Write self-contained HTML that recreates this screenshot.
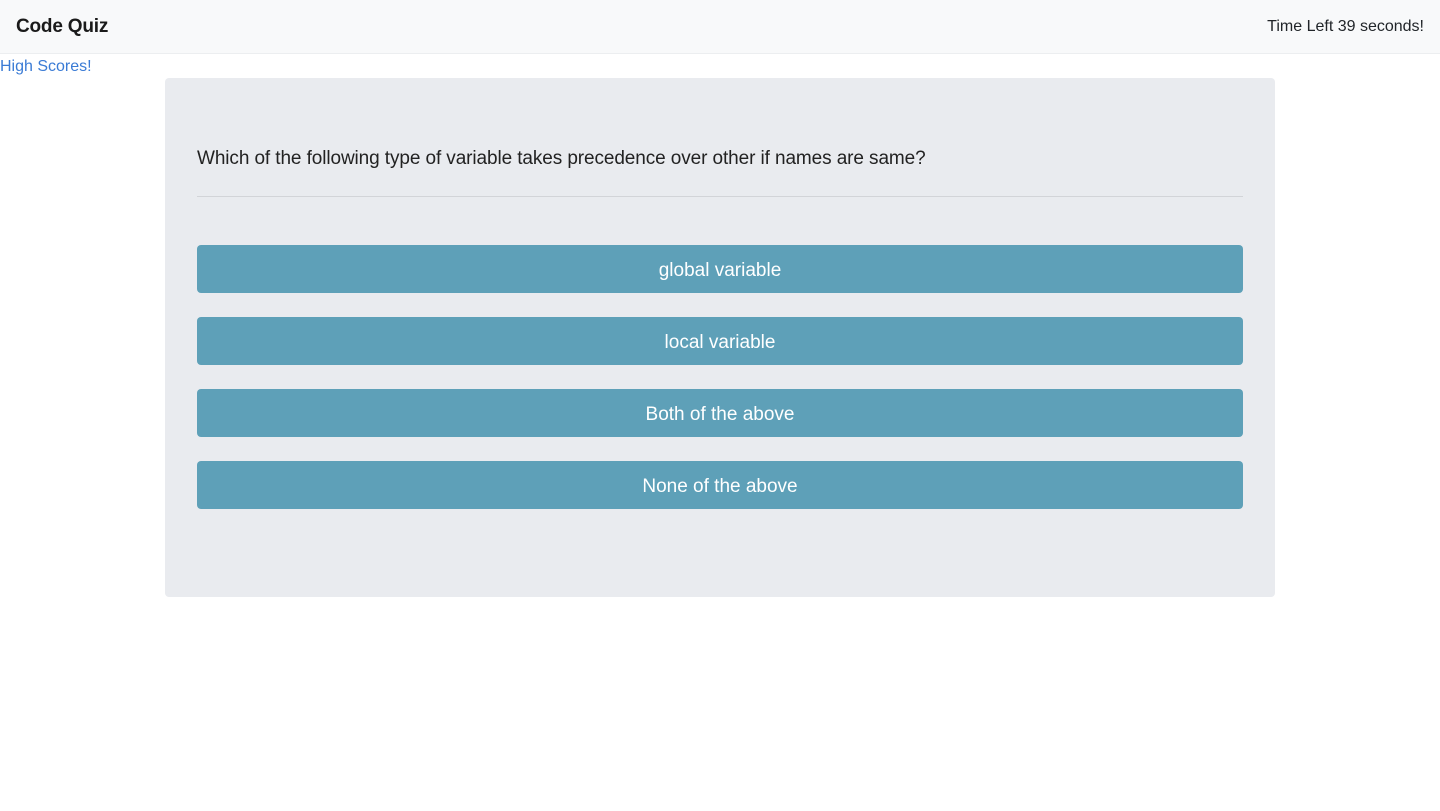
<!DOCTYPE html>
<html><head><meta charset="utf-8"><style>
body{margin:0;font-family:"Liberation Sans",sans-serif;background:#fff;color:#212529}
.nav{height:53px;background:#f8f9fa;border-bottom:1px solid #eceef0;position:relative}
.brand{position:absolute;left:16px;top:16px;font-size:19px;font-weight:bold;color:#1a1a1a;letter-spacing:-0.2px}
.time{position:absolute;right:16px;top:18px;font-size:16px}
.hs{position:absolute;left:0;top:58px;font-size:16px;color:#3a7bd5}
.card{position:absolute;left:165px;top:78px;width:1110px;height:519px;background:#e9ebef;border-radius:4px}
.q{position:absolute;left:32px;top:70px;font-size:19px;color:#222;letter-spacing:-0.1px}
.hr{position:absolute;left:32px;right:32px;top:118px;border-top:1px solid #d2d4d8}
.b{position:absolute;left:32px;width:1046px;height:48px;background:#5ea0b8;border-radius:4px;color:#fff;font-size:19px;text-align:center;line-height:52px}
</style></head><body>
<div class="nav"><div class="brand">Code Quiz</div><div class="time">Time Left 39 seconds!</div></div>
<div class="hs">High Scores!</div>
<div class="card">
<div class="q">Which of the following type of variable takes precedence over other if names are same?</div>
<div class="hr"></div>
<div class="b" style="top:167px">global variable</div>
<div class="b" style="top:239px">local variable</div>
<div class="b" style="top:311px">Both of the above</div>
<div class="b" style="top:383px">None of the above</div>
</div>
</body></html>
